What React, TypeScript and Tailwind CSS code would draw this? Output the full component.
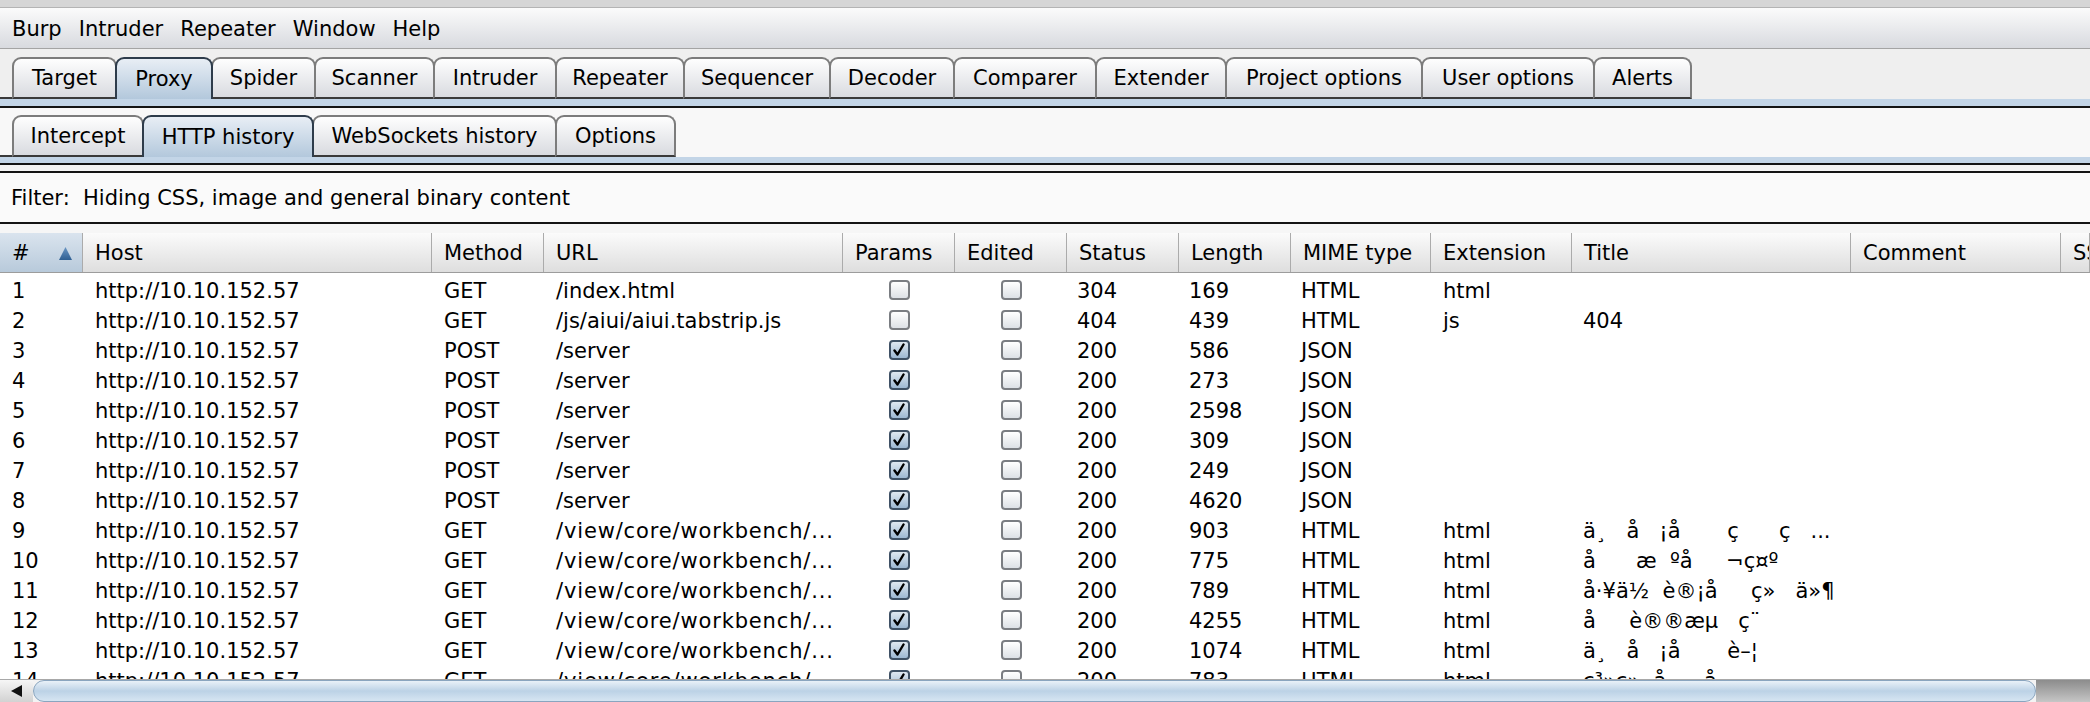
import React from "react";

const mainTabs: { label: string; w: string; active?: boolean }[] = [
  { label: "Target", w: "w-[105px]" },
  { label: "Proxy", w: "w-[98px]", active: true },
  { label: "Spider", w: "w-[105px]" },
  { label: "Scanner", w: "w-[121px]" },
  { label: "Intruder", w: "w-[124px]" },
  { label: "Repeater", w: "w-[130px]" },
  { label: "Sequencer", w: "w-[148px]" },
  { label: "Decoder", w: "w-[126px]" },
  { label: "Comparer", w: "w-[144px]" },
  { label: "Extender", w: "w-[132px]" },
  { label: "Project options", w: "w-[198px]" },
  { label: "User options", w: "w-[174px]" },
  { label: "Alerts", w: "w-[99px]" },
];

const subTabs: { label: string; w: string; active?: boolean }[] = [
  { label: "Intercept", w: "w-[132px]" },
  { label: "HTTP history", w: "w-[172px]", active: true },
  { label: "WebSockets history", w: "w-[245px]" },
  { label: "Options", w: "w-[121px]" },
];

const columns = ["#", "Host", "Method", "URL", "Params", "Edited", "Status", "Length", "MIME type", "Extension", "Title", "Comment", "SSL"];

type Row = [string, string, boolean, string, string, string, string, string];

const wb = "/view/core/workbench/...";
const rows: Row[] = [
  ["GET", "/index.html", false, "304", "169", "HTML", "html", ""],
  ["GET", "/js/aiui/aiui.tabstrip.js", false, "404", "439", "HTML", "js", "404"],
  ["POST", "/server", true, "200", "586", "JSON", "", ""],
  ["POST", "/server", true, "200", "273", "JSON", "", ""],
  ["POST", "/server", true, "200", "2598", "JSON", "", ""],
  ["POST", "/server", true, "200", "309", "JSON", "", ""],
  ["POST", "/server", true, "200", "249", "JSON", "", ""],
  ["POST", "/server", true, "200", "4620", "JSON", "", ""],
  ["GET", wb, true, "200", "903", "HTML", "html", "ä¸   å   ¡å       ç      ç   ..."],
  ["GET", wb, true, "200", "775", "HTML", "html", "å      æ  ºå     ¬ç¤º"],
  ["GET", wb, true, "200", "789", "HTML", "html", "å·¥ä½  è®¡å     ç»   ä»¶"],
  ["GET", wb, true, "200", "4255", "HTML", "html", "å     è®®æµ   ç¨"],
  ["GET", wb, true, "200", "1074", "HTML", "html", "ä¸   å   ¡å       è–¦"],
  ["GET", wb, true, "200", "783", "HTML", "html", "ç³»ç»  å   ¬å"],
];

function Tab({ label, w, active, first }: { label: string; w: string; active?: boolean; first: boolean }) {
  return (
    <div
      className={`${w} h-[42px] flex items-center justify-center pt-[2px] rounded-t-[9px] border-2 text-[21px] ${first ? "" : "-ml-[2px]"} ${
        active
          ? "relative z-10 border-b-0 border-[#2e3c4b] bg-gradient-to-b from-[#e8eef5] to-[#b3c8dc]"
          : "border-[#7c7c7c] border-b-[#3a3a3a] bg-gradient-to-b from-[#fefefe] to-[#d9dbe0]"
      }`}
    >
      {label}
    </div>
  );
}

function TabRow({ tabs, top }: { tabs: typeof mainTabs; top: string }) {
  return (
    <div className={`flex items-end ${top}`}>
      <div className="w-[12px] border-b-2 border-[#3a3a3a]" />
      {tabs.map((t, i) => (
        <Tab key={t.label} {...t} first={i === 0} />
      ))}
    </div>
  );
}

function Check({ on }: { on: boolean }) {
  if (!on)
    return <div className="w-[21px] h-[20px] rounded-[4px] border-2 border-[#7a7d82] bg-gradient-to-b from-[#ffffff] to-[#dde1e6]" />;
  return (
    <div className="w-[21px] h-[20px] rounded-[4px] border-2 border-[#3f5165] bg-gradient-to-b from-[#dfe8f1] to-[#9db8d2] flex items-center justify-center">
      <svg width="14" height="14" viewBox="0 0 14 14">
        <path d="M2.5 7.5 L5.5 11.5 L11.5 1.5" fill="none" stroke="#000" strokeWidth="2.4" strokeLinecap="round" strokeLinejoin="round" />
      </svg>
    </div>
  );
}

const grid =
  "grid grid-cols-[83px_349px_112px_299px_112px_112px_112px_112px_140px_141px_279px_210px_1fr]";

export default function App() {
  return (
    <div className="w-[2090px] h-[702px] overflow-hidden flex flex-col bg-[#f4f4f4] text-black font-['DejaVu_Sans',sans-serif]">
      <div className="h-[8px] bg-[#d6d6d6] border-b border-[#b4b4b4]" />

      {/* menu bar */}
      <div className="h-[41px] flex items-center gap-[17px] pl-[12px] pt-[3px] text-[21px] bg-gradient-to-b from-[#fbfbfb] to-[#d8dadf] border-b border-[#a4a4a4]">
        <span>Burp</span>
        <span>Intruder</span>
        <span>Repeater</span>
        <span>Window</span>
        <span>Help</span>
      </div>

      {/* main tabs */}
      <div className="bg-[#efefef]">
        <TabRow tabs={mainTabs} top="pt-[8px]" />
      </div>
      <div className="h-[7px] bg-[#c3d5e7]" />
      <div className="h-[2px] bg-[#141414]" />

      {/* proxy sub tabs */}
      <div className="bg-[#f8f8f8]">
        <TabRow tabs={subTabs} top="pt-[7px]" />
      </div>
      <div className="h-[6px] bg-[#c3d5e7]" />
      <div className="h-[2px] bg-[#141414]" />
      <div className="h-[6px] bg-[#f3f3f3]" />
      <div className="h-[2px] bg-[#141414]" />

      {/* filter */}
      <div className="h-[49px] flex items-center pl-[11px] pt-[3px] text-[21px] bg-[#fafafa] whitespace-pre">
        Filter:  Hiding CSS, image and general binary content
      </div>
      <div className="h-[2px] bg-[#141414]" />
      <div className="h-[9px] bg-[#f6f6f6]" />

      {/* table header */}
      <div className={`${grid} h-[40px] text-[21px] border-b border-[#9c9c9c] bg-gradient-to-b from-[#fbfbfb] to-[#dedede]`}>
        {columns.map((c, i) => (
          <div
            key={c}
            className={`flex items-center pl-[12px] pt-[2px] border-r border-[#ababab] overflow-hidden whitespace-nowrap ${
              i === 0 ? "justify-between pr-[10px] bg-gradient-to-b from-[#dae4ee] to-[#b8cadb]" : ""
            }`}
          >
            <span>{c}</span>
            {i === 0 && (
              <svg width="13" height="13" viewBox="0 0 13 13">
                <defs>
                  <linearGradient id="tri" x1="0" y1="0" x2="0" y2="1">
                    <stop offset="0" stopColor="#6a96c4" />
                    <stop offset="1" stopColor="#2f5f92" />
                  </linearGradient>
                </defs>
                <polygon points="0,13 6.5,0 13,13" fill="url(#tri)" />
              </svg>
            )}
          </div>
        ))}
      </div>

      {/* table rows */}
      <div className="flex-1 overflow-hidden bg-white text-[21px]">
        {rows.map((r, i) => (
          <div key={i} className={`${grid} h-[30px] leading-[30px] pt-[3px]`}>
            <div className="pl-[12px]">{i + 1}</div>
            <div className="pl-[12px]">http://10.10.152.57</div>
            <div className="pl-[12px]">{r[0]}</div>
            <div className={`pl-[12px] whitespace-nowrap overflow-hidden ${r[1] === wb ? "tracking-[0.85px]" : ""}`}>{r[1]}</div>
            <div className="flex items-center justify-center -mt-[3px]">
              <Check on={r[2]} />
            </div>
            <div className="flex items-center justify-center -mt-[3px]">
              <Check on={false} />
            </div>
            <div className="pl-[10px]">{r[3]}</div>
            <div className="pl-[10px]">{r[4]}</div>
            <div className="pl-[10px]">{r[5]}</div>
            <div className="pl-[12px]">{r[6]}</div>
            <div className="pl-[11px] whitespace-pre overflow-hidden">{r[7]}</div>
            <div />
            <div />
          </div>
        ))}
      </div>

      {/* horizontal scrollbar */}
      <div className="h-[23px] flex bg-[#f3f3f3] border-t border-[#a8a8a8]">
        <div className="w-[33px] flex items-center justify-center bg-gradient-to-b from-[#f6f6f6] to-[#d2d2d2]">
          <svg width="11" height="12" viewBox="0 0 11 12">
            <polygon points="0,6 11,0 11,12" fill="#111" />
          </svg>
        </div>
        <div className="flex-1 rounded-full border border-[#8aa5bf] bg-gradient-to-b from-[#e9f1f8] via-[#bcd2e6] to-[#d6e5f2]" />
        <div className="w-[54px] bg-gradient-to-b from-[#8c8c8c] to-[#c6c6c6]" />
      </div>
    </div>
  );
}
